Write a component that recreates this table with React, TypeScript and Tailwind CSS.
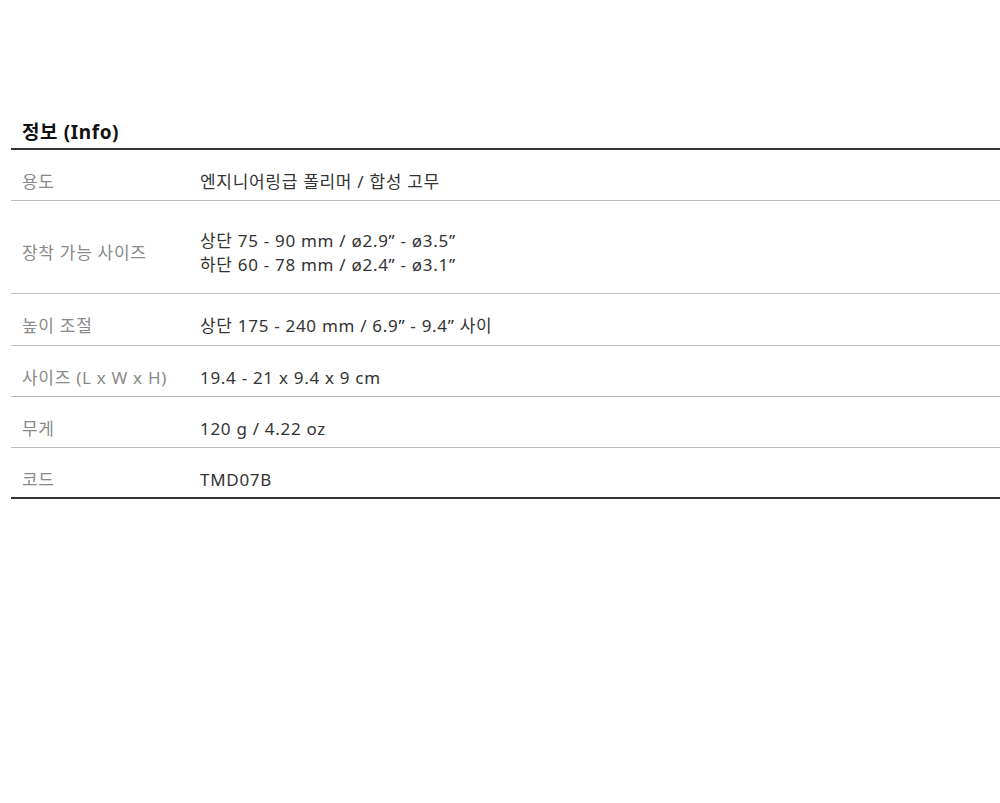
const rows: { label: string; value: string[]; pad: string }[] = [
  { label: '용도', value: ['엔지니어링급 폴리머 / 합성 고무'], pad: 'pt-[20px] pb-[6px]' },
  {
    label: '장착 가능 사이즈',
    value: ['상단 75 - 90 mm / ø2.9” - ø3.5”', '하단 60 - 78 mm / ø2.4” - ø3.1”'],
    pad: 'pt-[28px] pb-[16px]',
  },
  { label: '높이 조절', value: ['상단 175 - 240 mm / 6.9” - 9.4” 사이'], pad: 'pt-[20px] pb-[7px]' },
  { label: '사이즈 (L x W x H)', value: ['19.4 - 21 x 9.4 x 9 cm'], pad: 'pt-[20px] pb-[6px]' },
  { label: '무게', value: ['120 g / 4.22 oz'], pad: 'pt-[20px] pb-[6px]' },
  { label: '코드', value: ['TMD07B'], pad: 'pt-[20px] pb-[5px]' },
];

export default function App() {
  return (
    <div
      className="min-h-[803px] w-[1000px] bg-white pl-[11px] pt-[119px]"
      style={{ fontFamily: '"Noto Sans", "Noto Sans CJK KR", sans-serif' }}
    >
      <h2 className="pl-[11px] pb-[3px] text-[19px] font-bold leading-[26px] tracking-[0.6px] text-[#111]">
        정보 (Info)
      </h2>
      <div className="border-y-2 border-[#333]">
        {rows.map((row, i) => (
          <div
            key={row.label}
            className={`flex text-[17px] leading-[24px] tracking-[0.7px] ${row.pad} ${i < rows.length - 1 ? 'border-b border-[#bcbcbc]' : ''}`}
          >
            <div className="w-[189px] shrink-0 self-center pl-[11px] text-[#8a8a8a]">{row.label}</div>
            <div className="text-[#333]">
              {row.value.map((v) => (
                <div key={v}>{v}</div>
              ))}
            </div>
          </div>
        ))}
      </div>
    </div>
  );
}
